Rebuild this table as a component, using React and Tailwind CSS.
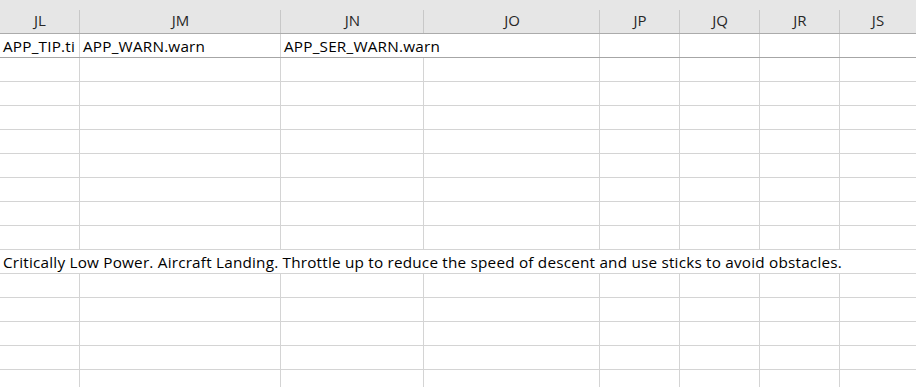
import React from "react";

const cols = [
  { name: "JL", w: 80 },
  { name: "JM", w: 201 },
  { name: "JN", w: 143 },
  { name: "JO", w: 176 },
  { name: "JP", w: 80 },
  { name: "JQ", w: 80 },
  { name: "JR", w: 80 },
  { name: "JS", w: 76 },
];

const font = { fontFamily: '"Open Sans", "Liberation Sans", Arial, sans-serif' };

function Header() {
  return (
    <div className="flex h-[34px] bg-[#e6e6e6] border-b border-[#ababab]">
      {cols.map((c, i) => (
        <div
          key={c.name}
          className={`relative shrink-0 flex items-end justify-center pb-[4px] text-[15px] leading-[18px] text-[#262626] ${
            i < cols.length - 1 ? "" : "grow"
          }`}
          style={{ width: c.w }}
        >
          {c.name}
          {i < cols.length - 1 && (
            <span className="absolute right-0 top-[10px] bottom-0 w-px bg-[#c8c8c8]" />
          )}
        </div>
      ))}
    </div>
  );
}

function Row({ cells = {}, noBorders = [], clip = [], bottom = "border-[#d4d4d4]" }) {
  return (
    <div className={`flex h-[24px] border-b ${bottom}`}>
      {cols.map((c, i) => {
        const last = i === cols.length - 1;
        const hasBorder = !last && !noBorders.includes(i);
        return (
          <div
            key={c.name}
            className={`shrink-0 flex items-end pl-[3px] pb-[2px] whitespace-nowrap text-[15.3px] tracking-[0.2px] leading-[18px] text-black ${
              hasBorder ? "border-r border-[#d4d4d4]" : ""
            } ${clip.includes(i) ? "overflow-hidden" : ""} ${last ? "grow" : ""}`}
            style={{ width: c.w }}
          >
            {cells[i] || ""}
          </div>
        );
      })}
    </div>
  );
}

export default function App() {
  const blank = Array.from({ length: 8 });
  return (
    <div className="w-[916px] h-[387px] overflow-hidden bg-white" style={font}>
      <Header />
      <Row
        cells={{ 0: "APP_TIP.ti", 1: "APP_WARN.warn", 2: "APP_SER_WARN.warn" }}
        clip={[0]}
        noBorders={[2]}
        bottom="border-[#a6a6a6]"
      />
      {blank.map((_, i) => (
        <Row key={"a" + i} />
      ))}
      <Row
        cells={{
          0: "Critically Low Power. Aircraft Landing. Throttle up to reduce the speed of descent and use sticks to avoid obstacles.",
        }}
        noBorders={[0, 1, 2, 3, 4, 5, 6]}
      />
      {Array.from({ length: 5 }).map((_, i) => (
        <Row key={"b" + i} />
      ))}
    </div>
  );
}
